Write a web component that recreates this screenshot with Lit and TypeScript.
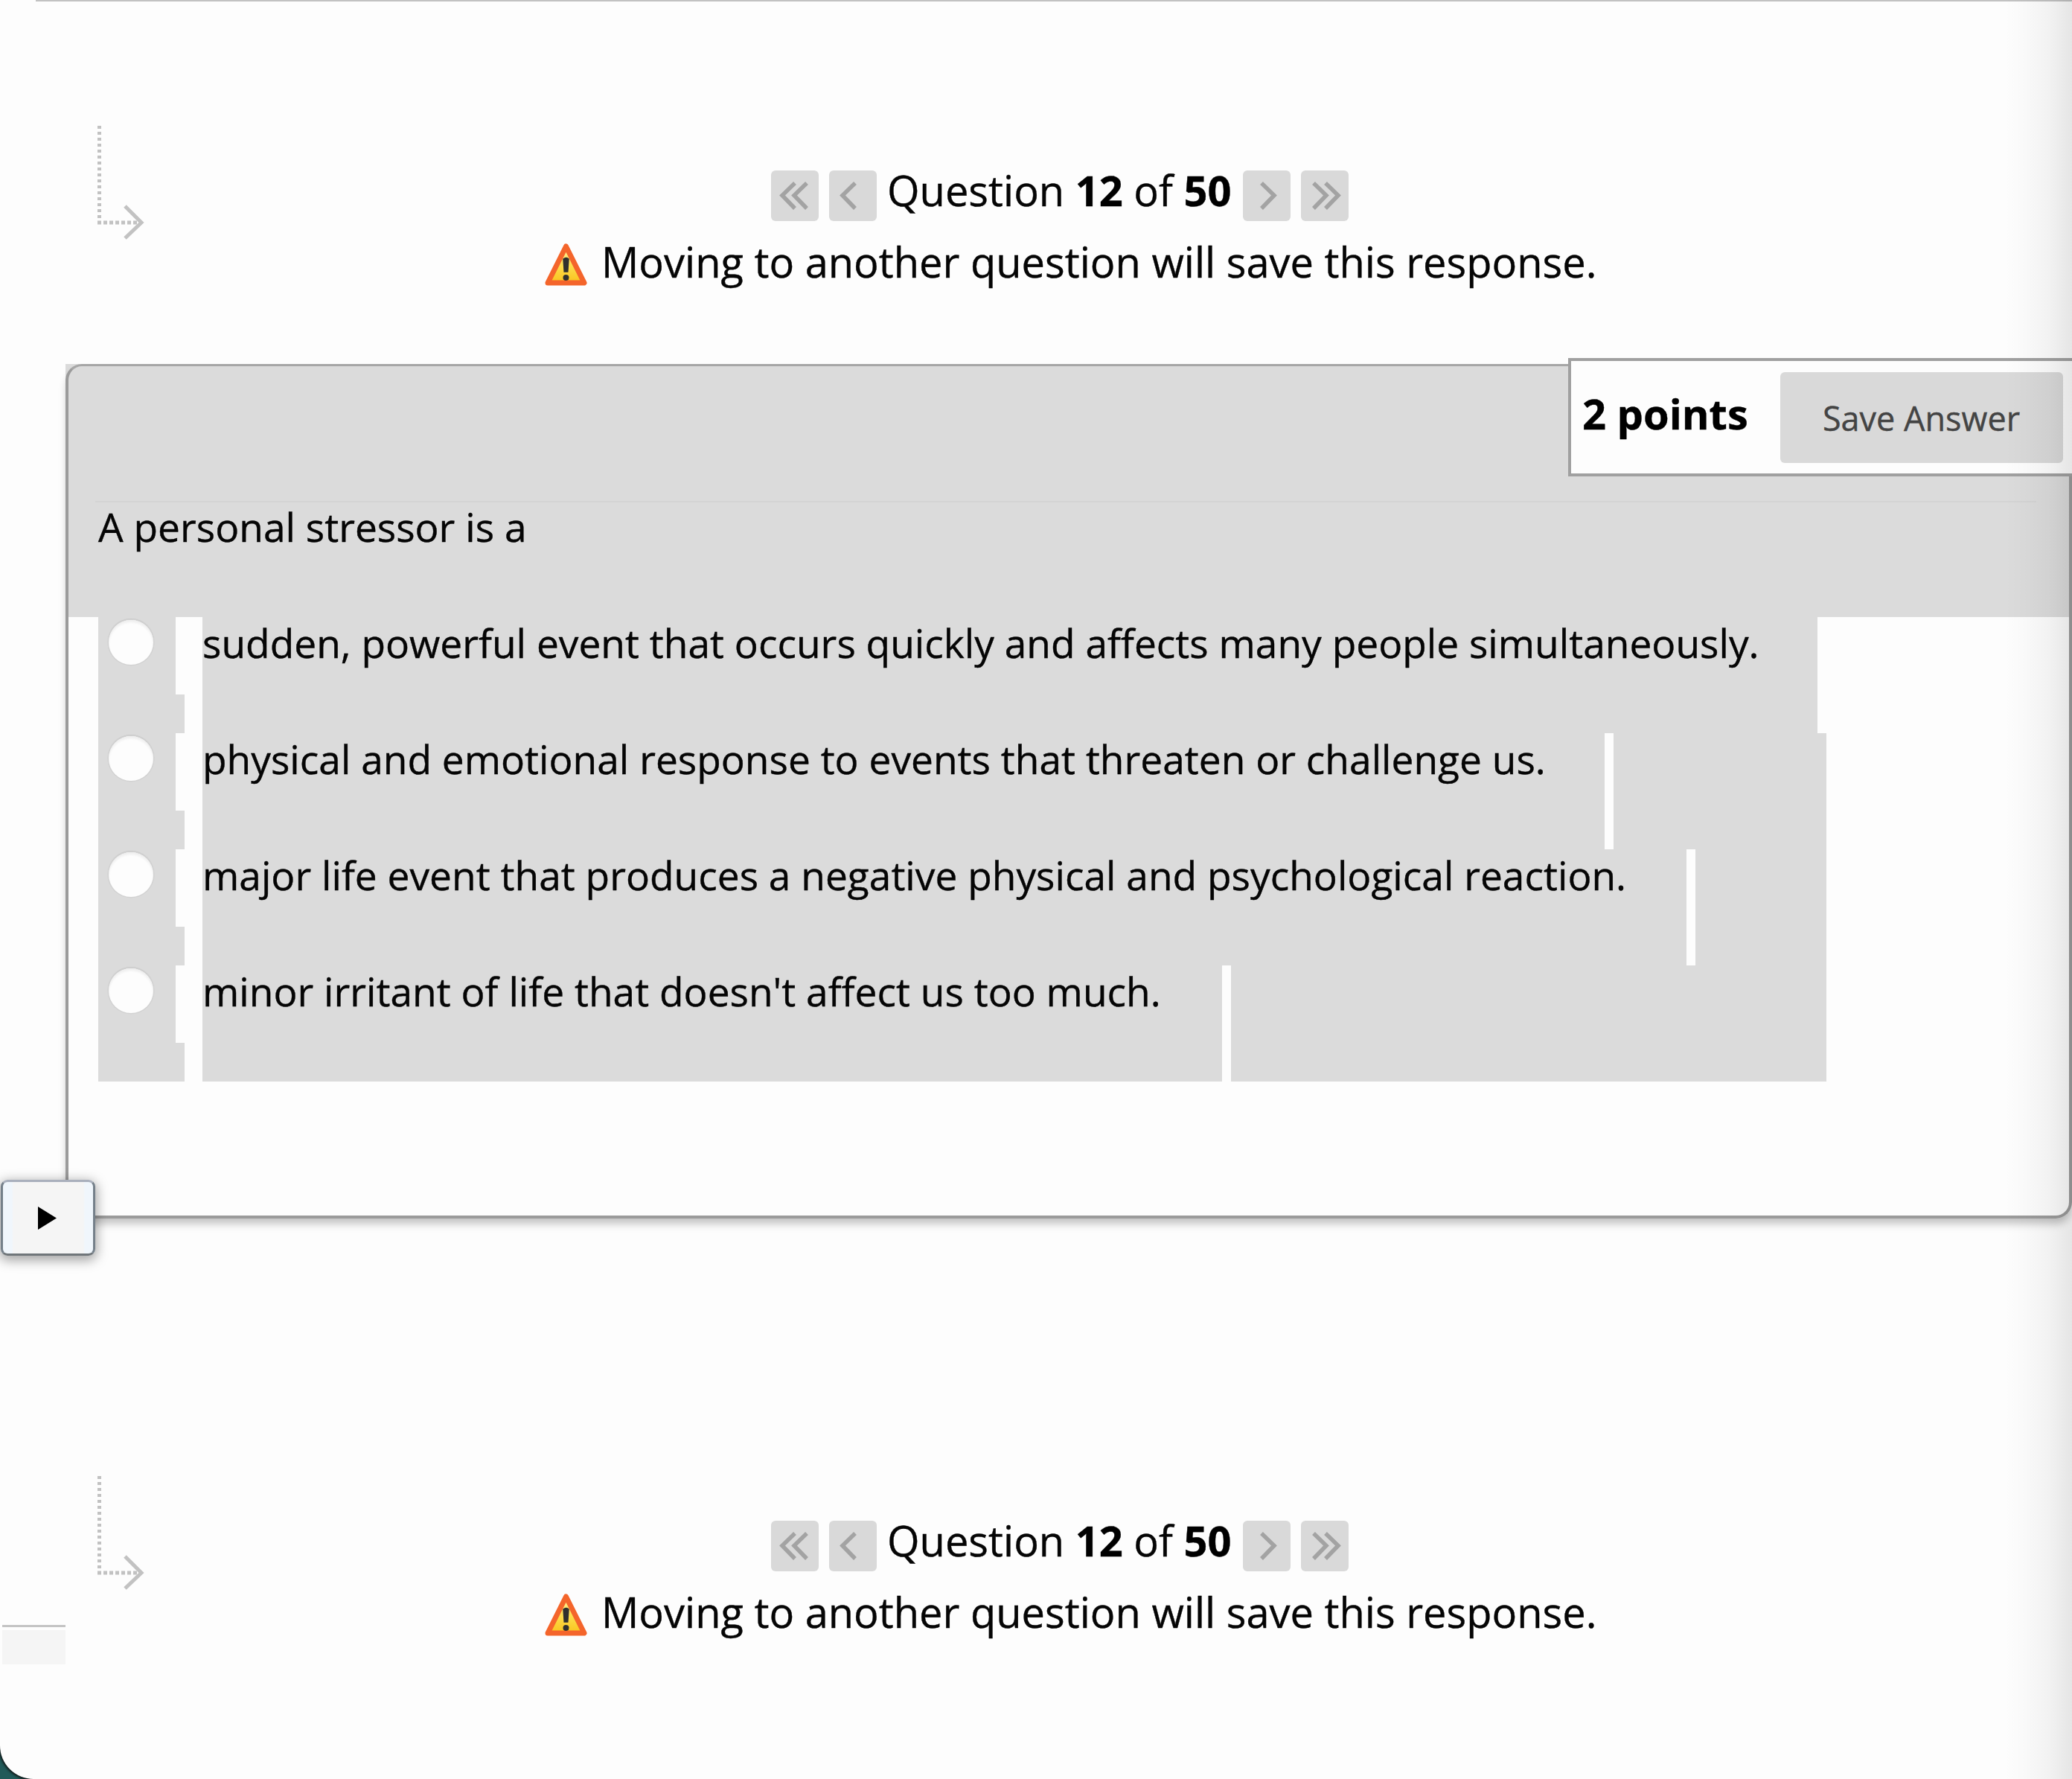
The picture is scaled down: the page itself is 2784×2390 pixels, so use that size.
import { LitElement, html, css, svg } from "lit";
import { customElement, property } from "lit/decorators.js";

const CHEVRONS: Record<string, string[]> = {
  first: ["M32 17 L15 33.5 L32 51", "M48 17 L31 33.5 L48 51"],
  prev: ["M35 17 L18 33.5 L35 51"],
  next: ["M25 17 L42 33.5 L25 51"],
  last: ["M17 17 L34 33.5 L17 51", "M33 17 L50 33.5 L33 51"],
};

@customElement("question-nav")
class QuestionNav extends LitElement {
  @property({ type: Number }) current = 1;
  @property({ type: Number }) total = 1;

  static styles = css`
    :host {
      display: flex;
      align-items: flex-start;
      padding: 168px 0 0 130px;
      height: 489px;
      box-sizing: border-box;
      font: 56px/76px "Open Sans", "Noto Sans", sans-serif;
      color: #050505;
      white-space: nowrap;
      -webkit-text-stroke: 0.4px;
    }
    svg { display: block; flex: none; }
    .arrow { width: 70px; height: 160px; }
    .content { margin-left: 531px; padding-top: 49px; }
    .pager { display: flex; align-items: flex-start; height: 96px; margin-left: 305px; }
    .btn {
      width: 64px;
      height: 68px;
      margin: 12px 0 0;
      padding: 0;
      border: 0;
      border-radius: 6px;
      background: #d9d9d9;
    }
    .btn + .btn { margin-left: 14px; }
    .label { margin: 0 16px 0 14px; }
    b { color: #000; }
    .notice { display: flex; align-items: flex-start; }
    .warn { width: 60px; height: 62px; margin: 12px 17px 0 0; }
  `;

  private button(kind: string) {
    return html`<button class="btn">
      <svg width="64" height="68" viewBox="0 0 64 68" fill="none" stroke="#a3a3a3" stroke-width="5.5" stroke-linejoin="miter">
        ${CHEVRONS[kind].map((d) => svg`<path d=${d} />`)}
      </svg>
    </button>`;
  }

  render() {
    return html`
      <svg class="arrow" viewBox="0 0 70 160" fill="none" stroke="#c2c2c2">
        <path d="M3.5 1 V126" stroke-width="5" stroke-dasharray="4 4" />
        <path d="M1 131 H60" stroke-width="5" stroke-dasharray="5 3" />
        <path d="M38 109 L60 131 L38 152" stroke-width="5" />
      </svg>
      <div class="content">
        <div class="pager">
          ${this.button("first")}${this.button("prev")}
          <span class="label">Question <b>${this.current}</b> of <b>${this.total}</b></span>
          ${this.button("next")}${this.button("last")}
        </div>
        <div class="notice">
          <svg class="warn" viewBox="0 0 60 62">
            <defs>
              <linearGradient id="y" x1="0" y1="0" x2="0" y2="1">
                <stop offset="0" stop-color="#fff3a0" />
                <stop offset="0.55" stop-color="#fddc4a" />
                <stop offset="1" stop-color="#f9c21c" />
              </linearGradient>
            </defs>
            <path d="M29.500 6 L54 55 H5 Z" fill="url(#y)" stroke="#f4652b" stroke-width="7" stroke-linejoin="round" />
            <path d="M26 23 Q29.500 20 33 23 L31.800 40 H27.200 Z" fill="#30302e" stroke="#30302e" stroke-width="1.500" />
            <circle cx="29.500" cy="48" r="4" fill="#30302e" />
          </svg>
          <span>Moving to another question will save this response.</span>
        </div>
      </div>
    `;
  }
}

@customElement("answer-row")
class AnswerRow extends LitElement {
  @property() text = "";
  @property({ type: Number }) cell = 0;

  static styles = css`
    :host { display: flex; height: 156px; width: 2322px; }
    .pick { width: 104px; background: #dbdbdb; flex: none; }
    .radio {
      width: 60px;
      height: 60px;
      margin: 4px 0 0 14px;
      border-radius: 50%;
      background: #fdfdfd;
      box-shadow: 0 0 0 1.500px #d2d2d2, 0 -1px 1px 1px #c6c6c6, inset 0 3px 3px #efefef;
    }
    .notch { width: 12px; height: 52px; align-self: flex-end; background: #dbdbdb; flex: none; }
    .text {
      flex: none;
      box-sizing: border-box;
      margin-left: 24px;
      background: #dbdbdb;
      white-space: nowrap;
      line-height: 70px;
    }
    .rest { flex: 1; margin-left: 12px; background: #dbdbdb; }
  `;

  render() {
    return html`
      <div class="pick"><div class="radio"></div></div>
      <div class="notch"></div>
      <div class="text" style="width:${this.cell}px">${this.text}</div>
      <div class="rest"></div>
    `;
  }
}

const ANSWERS = [
  { text: "sudden, powerful event that occurs quickly and affects many people simultaneously.", cell: 2170 },
  { text: "physical and emotional response to events that threaten or challenge us.", cell: 1884 },
  { text: "major life event that produces a negative physical and psychological reaction.", cell: 1994 },
  { text: "minor irritant of life that doesn't affect us too much.", cell: 1370 },
];

@customElement("app-root")
class AppRoot extends LitElement {
  static styles = css`
    :host { display: block; background: #225a59; }
    .page {
      position: relative;
      height: 2390px;
      overflow: hidden;
      background: #fdfdfd;
      border-bottom-left-radius: 45px;
      box-shadow: 0 0 3px 2px #101818;
      font: 53.270px/65px "Open Sans", "Noto Sans", sans-serif;
      color: #050505;
      -webkit-text-stroke: 0.4px;
    }
    .topline { position: absolute; left: 48px; right: 0; top: 0; height: 2px; background: #c2c2c2; }
    .wrap {
      position: relative;
      margin-left: 88px;
      height: 1148px;
      background: linear-gradient(#dbdbdb 340px, #fdfdfd 340px);
    }
    .panel {
      box-sizing: border-box;
      height: 1148px;
      border: 4px solid #9b9b9b;
      border-top: 3px solid #a6a6a6;
      border-radius: 22px;
      box-shadow: 0 9px 12px -2px rgba(0, 0, 0, 0.24);
    }
    .head { height: 183px; box-sizing: border-box; margin: 0 44px 0 36px; border-bottom: 2px solid #d4d4d4; }
    .prompt { height: 154px; margin: 0 0 0 40px; }
    .answers { margin-left: 40px; }
    .points {
      position: absolute;
      top: -8px;
      right: 0;
      width: 677px;
      height: 159px;
      box-sizing: border-box;
      border: 4px solid #a0a0a0;
      border-right: 0;
      background: #fdfdfd;
      display: flex;
      align-items: flex-start;
      font-size: 56px;
      line-height: 76px;
    }
    .points b { color: #000; width: 266px; margin: 32px 0 0 15px; white-space: nowrap; }
    .save {
      width: 380px;
      height: 122px;
      margin: 15px 0 0;
      border: 0;
      padding: 1px 1px 0 0;
      border-radius: 6px;
      background: #d9d9d9;
      color: #444;
      font: 45px/121px "Open Sans", "Noto Sans", sans-serif;
      white-space: nowrap;
    }
    .lower { margin-top: 177px; }
    .play {
      position: absolute;
      left: 1px;
      top: 1585px;
      width: 127px;
      height: 102px;
      box-sizing: border-box;
      padding: 0;
      border: 3px solid #75808a;
      border-top-color: #aab0bd;
      border-bottom-color: #70767a;
      border-radius: 9px;
      background: linear-gradient(90deg, #f0f6fc 12px, #f5f5f5 14px, #f5f5f5 108px, #f0f6fc 110px);
      box-shadow: 0 4px 16px 2px rgba(0, 0, 0, 0.36);
    }
    .play svg { display: block; }
    .status {
      position: absolute;
      left: 3px;
      top: 2183px;
      width: 85px;
      height: 53px;
      box-sizing: border-box;
      border-top: 3px solid #c4c4c4;
      background: linear-gradient(#fdfdfd 4px, #f5f5f5 4px);
    }
    .edge {
      position: absolute;
      top: 0;
      bottom: 0;
      right: 0;
      width: 90px;
      pointer-events: none;
      background: linear-gradient(90deg, rgba(0, 0, 0, 0), rgba(0, 0, 0, 0.015) 30%, rgba(0, 0, 0, 0.045) 65%, rgba(0, 0, 0, 0.095));
    }
  `;

  render() {
    return html`
      <div class="page">
        <div class="topline"></div>
        <question-nav .current=${12} .total=${50}></question-nav>
        <div class="wrap">
          <div class="panel">
            <div class="head"></div>
            <div class="prompt">A personal stressor is a</div>
            <div class="answers">
              ${ANSWERS.map((a) => html`<answer-row .text=${a.text} .cell=${a.cell}></answer-row>`)}
            </div>
          </div>
          <div class="points">
            <b>2 points</b>
            <button class="save">Save Answer</button>
          </div>
        </div>
        <question-nav class="lower" .current=${12} .total=${50}></question-nav>
        <button class="play">
          <svg width="121" height="96" viewBox="0 0 121 96"><path d="M47 33 L72 48.500 L47 64 Z" fill="#000" /></svg>
        </button>
        <div class="status"></div>
        <div class="edge"></div>
      </div>
    `;
  }
}
